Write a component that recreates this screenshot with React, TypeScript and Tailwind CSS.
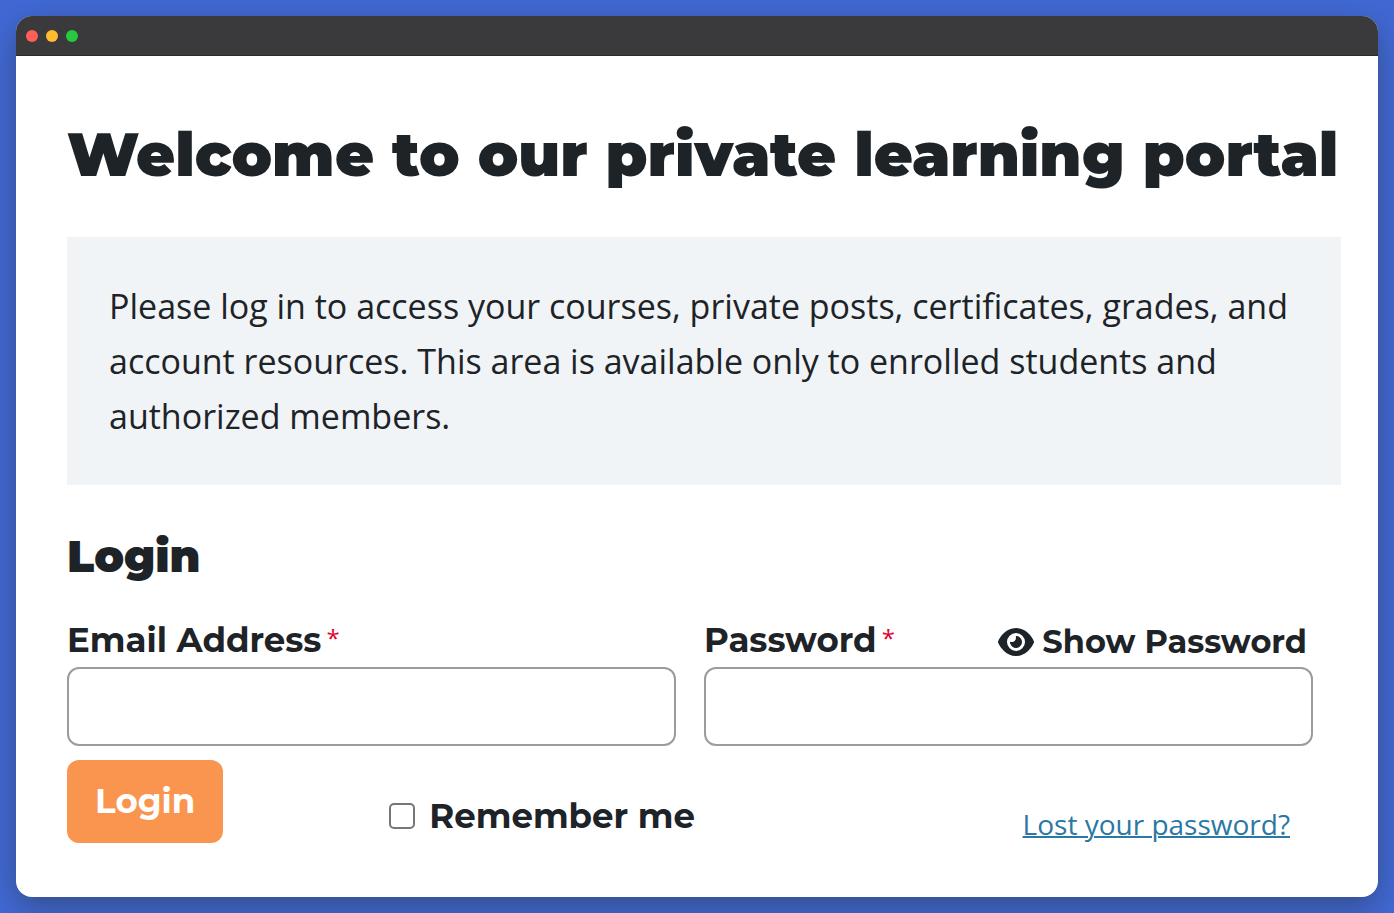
import { useState } from 'react';
import { FaEye } from 'react-icons/fa6';

const heading = "font-['Montserrat','Inter','Open_Sans',sans-serif] text-[#1d2327]";
const field = 'h-[79px] w-full rounded-xl border-2 border-[#9c9c9c] px-5 text-[32px]';

export default function App() {
  const [showPassword, setShowPassword] = useState(false);

  return (
    <div className="min-h-screen bg-[#4169d5] p-4 font-['Open_Sans',sans-serif] text-[#1d2327]">
      <div className="flex min-h-[calc(100vh-32px)] flex-col overflow-hidden rounded-2xl bg-white shadow-[0_10px_30px_rgba(40,50,70,0.5)]">
        <div className="flex h-10 items-center gap-2 border-b border-[#2b2b2c] bg-[#3a3a3c] px-[10px]">
          <span className="size-3 rounded-full bg-[#ff5f57]" />
          <span className="size-3 rounded-full bg-[#febc2e]" />
          <span className="size-3 rounded-full bg-[#28c840]" />
        </div>

        <main className="pt-[63px] pr-[37px] pl-[51px]">
          <h1 className={`${heading} text-[60px] leading-[72px] font-black`}>
            Welcome to our private learning portal
          </h1>

          <p className="mt-[46px] bg-[#f1f4f7] px-[42px] pt-[42px] pb-[41px] text-[34px] leading-[55px]">
            Please log in to access your courses, private posts, certificates, grades, and account
            resources. This area is available only to enrolled students and authorized members.
          </p>

          <form className="mt-[41px] pr-7" onSubmit={(e) => e.preventDefault()}>
            <h2 className={`${heading} text-[44px] leading-[60px] font-black`}>Login</h2>

            <div className="mt-[30px] grid grid-cols-2 gap-7">
              <div>
                <div className="mb-[3px] flex h-12 items-center gap-[5px]">
                  <label htmlFor="email" className={`${heading} text-[34px] font-bold`}>
                    Email Address
                  </label>
                  <span className="pb-1 text-[24px] text-[#e0002d]">*</span>
                </div>
                <input id="email" type="email" required className={field} />
              </div>

              <div>
                <div className="mb-[3px] flex h-12 items-center gap-[5px]">
                  <label htmlFor="password" className={`${heading} text-[34px] font-bold`}>
                    Password
                  </label>
                  <span className="pb-1 text-[24px] text-[#e0002d]">*</span>
                  <button
                    type="button"
                    onClick={() => setShowPassword(!showPassword)}
                    className={`${heading} mr-[6px] ml-auto flex items-center gap-2 pt-1 text-[32px] font-bold`}
                  >
                    <FaEye className="size-9" />
                    {showPassword ? 'Hide Password' : 'Show Password'}
                  </button>
                </div>
                <input
                  id="password"
                  type={showPassword ? 'text' : 'password'}
                  required
                  className={field}
                />
              </div>
            </div>

            <div className="mt-[14px] flex items-start">
              <button
                type="submit"
                className="h-[83px] rounded-xl bg-[#fa954f] px-7 font-['Montserrat','Inter',sans-serif] text-[34px] font-bold text-white"
              >
                Login
              </button>
              <label className={`${heading} mt-8 ml-[166px] flex items-center gap-[14px] text-[34px] leading-[48px] font-bold`}>
                <input
                  type="checkbox"
                  className="size-[26px] appearance-none rounded-[5px] border-2 border-[#767676] checked:bg-[#2271b1]"
                />
                Remember me
              </label>
              <a
                href="#lost"
                className="mt-[41px] mr-[23px] ml-auto text-[28px] leading-[46px] text-[#2a78a3] underline decoration-2"
              >
                Lost your password?
              </a>
            </div>
          </form>
        </main>
      </div>
    </div>
  );
}
